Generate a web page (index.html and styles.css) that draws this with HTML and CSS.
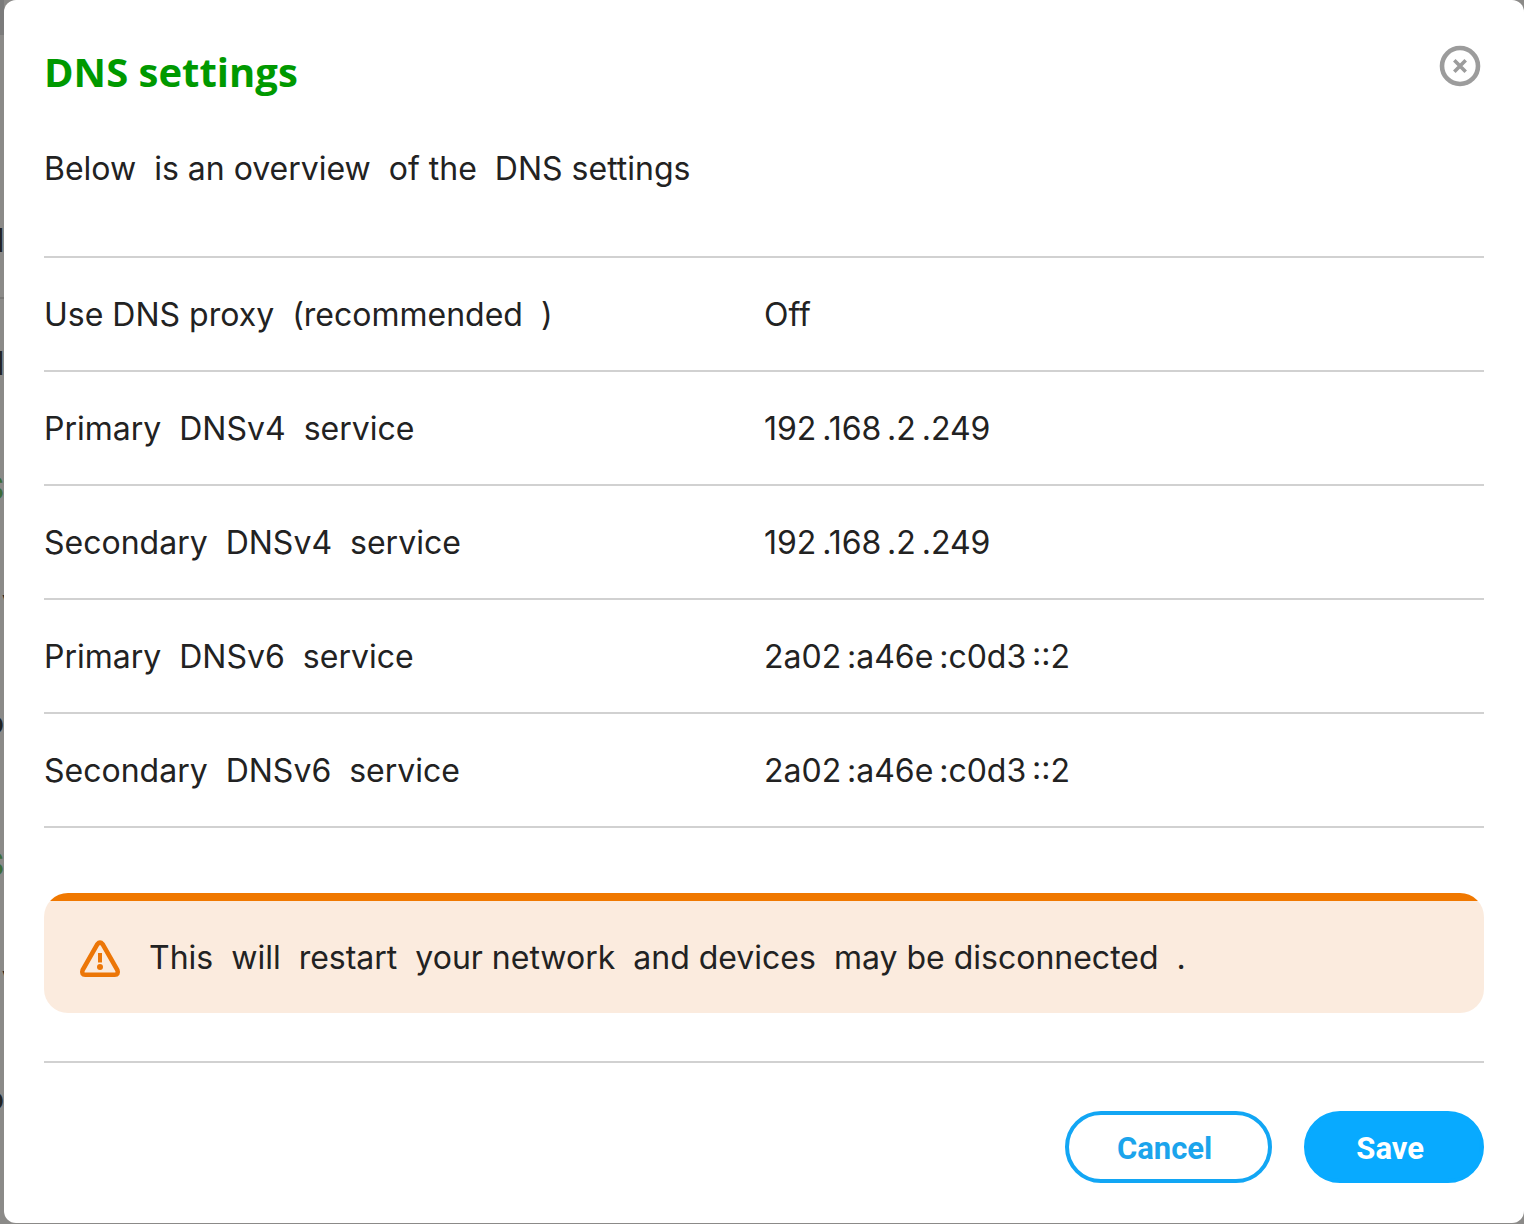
FILE: index.html
```html
<!DOCTYPE html>
<html lang="en">
<head>
<meta charset="utf-8">
<meta name="viewport" content="width=device-width, initial-scale=1">
<title>DNS settings</title>
<link rel="stylesheet" href="styles.css">
</head>
<body>
<div class="page-behind" aria-hidden="true">
  <span class="behind-text behind-first">l</span>
  <span class="behind-line"></span>
  <span class="behind-text behind-label">l</span>
  <span class="behind-text behind-heading">S</span>
  <span class="behind-text behind-value">v</span>
  <span class="behind-text behind-round">o</span>
  <span class="behind-text behind-heading behind-second">S</span>
  <span class="behind-text behind-value">v</span>
  <span class="behind-text behind-round">o</span>
</div>
<main class="dialog" role="dialog" aria-labelledby="dialog-title">
  <header class="dialog-header">
    <h1 class="dialog-title" id="dialog-title">DNS settings</h1>
    <button class="close-button" type="button" aria-label="Close">
      <svg viewBox="0 0 42 42" width="42" height="42" fill="none" stroke="currentColor">
        <circle cx="21" cy="21" r="18" stroke-width="4.6"/>
        <path d="M15.3 15.3 26.7 26.7M26.7 15.3 15.3 26.7" stroke-width="3.6"/>
      </svg>
    </button>
  </header>
  <p class="intro">Below  is an overview  of the  DNS settings</p>
  <table class="settings">
    <tbody>
      <tr><th scope="row">Use DNS proxy  (recommended  )</th><td>Off</td></tr>
      <tr><th scope="row">Primary  DNSv4  service</th><td>192&thinsp;.168&thinsp;.2&thinsp;.249</td></tr>
      <tr><th scope="row">Secondary  DNSv4  service</th><td>192&thinsp;.168&thinsp;.2&thinsp;.249</td></tr>
      <tr><th scope="row">Primary  DNSv6  service</th><td>2a02&thinsp;:a46e&thinsp;:c0d3&thinsp;::2</td></tr>
      <tr><th scope="row">Secondary  DNSv6  service</th><td>2a02&thinsp;:a46e&thinsp;:c0d3&thinsp;::2</td></tr>
    </tbody>
  </table>
  <div class="warning" role="alert">
    <svg class="warning-icon" viewBox="0 0 42 40" width="42" height="40" fill="none" stroke="currentColor" aria-hidden="true">
      <path d="M18.4 6.2Q21 3 23.6 6.2L38.4 32.2Q39.9 36.4 35.6 36.8H6.4Q2.1 36.4 3.6 32.2Z" stroke-width="4.6" stroke-linejoin="round"/>
      <path d="M21 15v9.5" stroke-width="4"/>
      <circle cx="21" cy="29" r="3" fill="currentColor" stroke="none"/>
    </svg>
    <p class="warning-text">This  will  restart  your network  and devices  may be disconnected  .</p>
  </div>
  <footer class="dialog-footer">
    <button class="button button-outline" type="button">Cancel</button>
    <button class="button button-solid" type="button">Save</button>
  </footer>
</main>
</body>
</html>
```
FILE: styles.css
```css
* {
  box-sizing: border-box;
}

body {
  margin: 0;
  padding: 0 0 1px 4px;
  background: #8b8a88;
  color: #222;
  font-family: Inter, "Liberation Sans", sans-serif;
  font-size: 32px;
  line-height: 48px;
}

.page-behind {
  position: absolute;
  top: 0;
  bottom: 0;
  left: 0;
  width: 4px;
  overflow: hidden;
  display: flex;
  flex-direction: column;
  align-items: flex-end;
  background: linear-gradient(#7b7b7b 35px, transparent 35px);
}

.behind-text {
  flex: none;
  height: 48px;
  font-weight: 600;
}

.behind-first {
  margin-top: 217px;
}

.behind-line {
  flex: none;
  width: 100%;
  height: 2px;
  margin-top: 32px;
  background: #797876;
}

.behind-label {
  margin-top: 41px;
}

.behind-heading {
  margin-top: 77px;
  color: #3d6b38;
}

.behind-value {
  align-self: flex-start;
  margin: 65px 0 0 2px;
}

.behind-round {
  margin-top: 73px;
}

.behind-second {
  margin-top: 94px;
}

.dialog {
  position: relative;
  padding: 45px 40px 40px;
  border-radius: 12px;
  background: #fff;
}

.dialog-header {
  display: flex;
  align-items: flex-start;
  justify-content: space-between;
}

.dialog-title {
  margin: 0;
  color: #090;
  font-family: "Open Sans", "Noto Sans", sans-serif;
  font-size: 40px;
  font-weight: 700;
  line-height: 54px;
}

.close-button {
  display: flex;
  margin: 0 3px 0 0;
  padding: 0;
  border: 0;
  background: none;
  color: #9c9c9c;
}

.intro {
  margin: 46px 0 63px;
  white-space: pre-wrap;
}

.settings {
  width: 100%;
  table-layout: fixed;
  border-collapse: collapse;
  border-top: 2px solid #d1d1d1;
}

.settings tr {
  border-bottom: 2px solid #d1d1d1;
}

.settings th,
.settings td {
  height: 114px;
  padding: 2px 0 0;
  font-weight: 400;
  text-align: left;
  white-space: pre-wrap;
}

.warning {
  display: flex;
  align-items: center;
  gap: 28px;
  margin: 65px 0 48px;
  padding: 41px 35px 31px;
  border-radius: 24px;
  background: linear-gradient(#f07800 8px, #fbebde 8px);
}

.warning-icon {
  flex: none;
  color: #ec7607;
}

.warning-text {
  margin: 0;
  white-space: pre-wrap;
}

.dialog-footer {
  display: flex;
  justify-content: flex-end;
  gap: 32px;
  padding-top: 48px;
  border-top: 2px solid #d1d1d1;
}

.button {
  height: 72px;
  padding: 2px 56px 0 48px;
  border: 4px solid #08aaff;
  border-radius: 36px;
  font-family: Roboto, Inter, sans-serif;
  font-size: 31px;
  font-weight: 700;
}

.button-outline {
  background: #fff;
  color: #1ba4ec;
  border-color: #12a6f4;
}

.button-solid {
  background: #08aaff;
  color: #fff;
}
```
